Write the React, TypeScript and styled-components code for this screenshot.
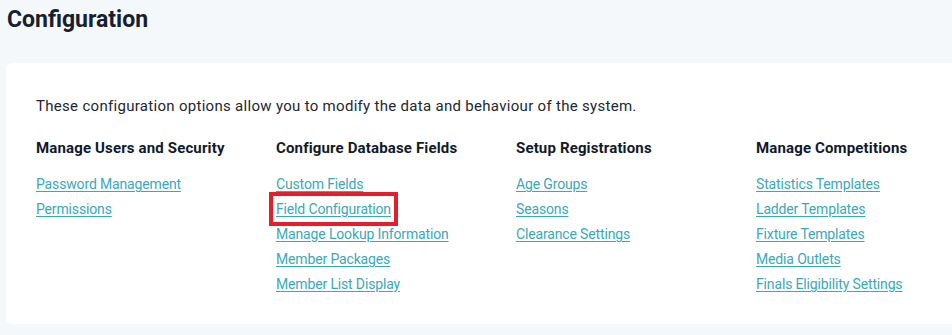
import styled, { createGlobalStyle } from 'styled-components';

const GlobalStyle = createGlobalStyle`
  html, body {
    margin: 0;
    padding: 0;
    background: #f5f8fb;
    font-family: Roboto, "Liberation Sans", sans-serif;
  }
`;

interface Section {
  title: string;
  links: string[];
}

const sections: Section[] = [
  {
    title: 'Manage Users and Security',
    links: ['Password Management', 'Permissions'],
  },
  {
    title: 'Configure Database Fields',
    links: [
      'Custom Fields',
      'Field Configuration',
      'Manage Lookup Information',
      'Member Packages',
      'Member List Display',
    ],
  },
  {
    title: 'Setup Registrations',
    links: ['Age Groups', 'Seasons', 'Clearance Settings'],
  },
  {
    title: 'Manage Competitions',
    links: [
      'Statistics Templates',
      'Ladder Templates',
      'Fixture Templates',
      'Media Outlets',
      'Finals Eligibility Settings',
    ],
  },
];

const highlighted = 'Field Configuration';

export default function App() {
  return (
    <Page>
      <GlobalStyle />
      <PageTitle>Configuration</PageTitle>
      <Card>
        <Intro>These configuration options allow you to modify the data and behaviour of the system.</Intro>
        <Columns>
          {sections.map((s) => (
            <Column key={s.title}>
              <Heading>{s.title}</Heading>
              <LinkList>
                {s.links.map((l) => (
                  <li key={l}>
                    <NavLink href="#" $marked={l === highlighted}>
                      {l}
                    </NavLink>
                  </li>
                ))}
              </LinkList>
            </Column>
          ))}
        </Columns>
      </Card>
    </Page>
  );
}

const Page = styled.div`
  padding: 0 0 12px 6px;
`;

const PageTitle = styled.h1`
  margin: 0;
  padding: 5px 0 0 1px;
  height: 63px;
  box-sizing: border-box;
  font-size: 23px;
  font-weight: 700;
  line-height: 30px;
  color: #18202e;
`;

const Card = styled.div`
  background: #fff;
  border-radius: 6px 0 0 6px;
  padding: 33px 30px 30px;
`;

const Intro = styled.p`
  margin: 0;
  font-size: 15px;
  line-height: 20px;
  letter-spacing: 0.3px;
  color: #222831;
`;

const Columns = styled.div`
  display: grid;
  grid-template-columns: repeat(4, 240px);
  margin-top: 22px;
`;

const Column = styled.div`
  display: flex;
  flex-direction: column;
`;

const Heading = styled.h3`
  margin: 0;
  font-size: 15px;
  font-weight: 700;
  line-height: 20px;
  letter-spacing: 0.15px;
  color: #111a2b;
`;

const LinkList = styled.ul`
  list-style: none;
  margin: 16px 0 0;
  padding: 0;
  display: flex;
  flex-direction: column;
  gap: 5px;
`;

const NavLink = styled.a<{ $marked?: boolean }>`
  display: inline-block;
  font-size: 14px;
  line-height: 20px;
  letter-spacing: -0.15px;
  color: #39a9b8;
  text-decoration: underline;
  text-underline-offset: 2px;
  outline: ${({ $marked }) => ($marked ? '4px solid #e41e2b' : 'none')};
  outline-offset: 3px;
`;
